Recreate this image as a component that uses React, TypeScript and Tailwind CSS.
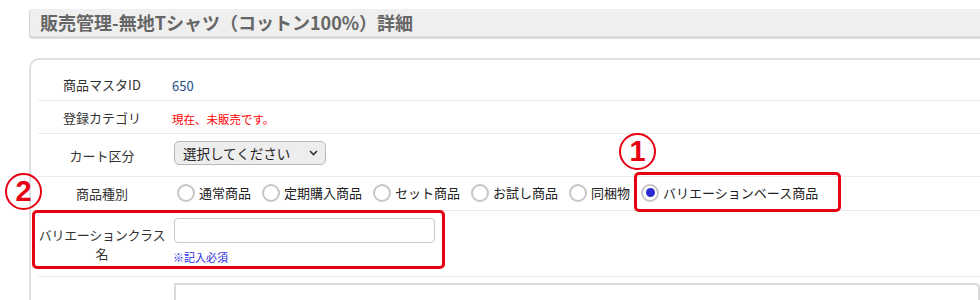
import React from "react";

const KINDS = [
  { label: "通常商品", checked: false },
  { label: "定期購入商品", checked: false },
  { label: "セット商品", checked: false },
  { label: "お試し商品", checked: false },
  { label: "同梱物", checked: false },
  { label: "バリエーションベース商品", checked: true },
];

const Radio = ({ label, checked }: { label: string; checked: boolean }) => (
  <span className="flex items-center mr-[11px]">
    <span className="w-[18px] h-[18px] rounded-full border-2 border-[#c6c6c6] bg-white flex items-center justify-center shrink-0">
      {checked && <span className="w-[9px] h-[9px] rounded-full bg-[#2a2ad2]" />}
    </span>
    <span className="ml-[4px] text-[13px] text-[#222] whitespace-nowrap">{label}</span>
  </span>
);

const Row = ({
  label,
  className,
  children,
}: {
  label: React.ReactNode;
  className: string;
  children?: React.ReactNode;
}) => (
  <div className={`flex items-center border-b border-[#ebebeb] ${className}`}>
    <div className="w-[128px] shrink-0 text-center text-[13px] leading-[19px] text-[#333]">{label}</div>
    <div className="pl-[8px] flex-1 min-w-0">{children}</div>
  </div>
);

const CircleNum = ({ n, className }: { n: string; className: string }) => (
  <div
    className={`absolute w-[37px] h-[37px] rounded-full border-2 border-[#e60012] flex items-center justify-center text-[#e60012] text-[29px] font-bold leading-none font-['Liberation_Sans',sans-serif] ${className}`}
  >
    {n}
  </div>
);

export default function App() {
  return (
    <div className="relative w-[980px] h-[300px] overflow-hidden bg-white font-['Noto_Sans_CJK_JP',sans-serif]">
      {/* page title bar */}
      <div className="ml-[29px] mt-[9px] h-[30px] bg-[#efefef] border-l border-[#d4d4d4] border-b-[3px] border-b-[#dcdcdc] rounded-l-[4px] flex items-center pl-[10px]">
        <h1 className="text-[18px] font-bold text-[#666]">
          販売管理-無地Tシャツ（コットン100%）詳細
        </h1>
      </div>

      {/* detail card */}
      <div className="mt-[19px] ml-[29px] border-l-2 border-t-2 border-[#e0e0e0] rounded-tl-[10px] pl-[7px] pt-[8px]">
        <Row label="商品マスタID" className="h-[33px]">
          <span className="text-[13px] text-[#1f4e85] -ml-[2px]">650</span>
        </Row>
        <Row label="登録カテゴリ" className="h-[33px]">
          <span className="text-[11.5px] text-[#ff0000] -ml-[2px]">現在、未販売です。</span>
        </Row>
        <Row label="カート区分" className="h-[43px]">
          <div className="w-[152px] h-[24px] -mt-[4px] rounded-[5px] border border-[#b8b8b8] bg-[#ededed] flex items-center justify-between pl-[8px] pr-[7px]">
            <span className="text-[13.5px] text-[#222]">選択してください</span>
            <svg width="9" height="6" viewBox="0 0 9 6" fill="none">
              <path d="M1 1l3.5 3.5L8 1" stroke="#333" strokeWidth="1.6" />
            </svg>
          </div>
        </Row>
        <Row label="商品種別" className="h-[34px]">
          <div className="flex items-center ml-[3px] -mt-[2px]">
            {KINDS.map((k) => (
              <Radio key={k.label} label={k.label} checked={k.checked} />
            ))}
          </div>
        </Row>
        <Row
          label={
            <>
              <div className="whitespace-nowrap tracking-[-0.3px]">バリエーションクラス</div>
              <div>名</div>
            </>
          }
          className="h-[66px]"
        >
          <div className="flex flex-col items-start -mt-[3px]">
            <div className="w-[261px] h-[25px] rounded-[4px] border border-[#c8c8c8] bg-white" />
            <span className="mt-[6px] text-[11px] text-[#2b2bdf] -ml-[1px]">※記入必須</span>
          </div>
        </Row>
        <div className="flex pt-[6px]">
          <div className="w-[136px] shrink-0" />
          <div className="flex-1 h-[40px] rounded-tr-[5px] border-t-2 border-x-2 border-[#dadada]" />
        </div>
      </div>

      {/* annotations */}
      <CircleNum n="1" className="left-[619px] top-[133px]" />
      <div className="absolute left-[634px] top-[172px] w-[207px] h-[40px] rounded-[5px] border-[3px] border-[#e60012]" />
      <CircleNum n="2" className="left-[5px] top-[173px]" />
      <div className="absolute left-[32px] top-[210px] w-[413px] h-[59px] rounded-[5px] border-[3px] border-[#e60012]" />
    </div>
  );
}
